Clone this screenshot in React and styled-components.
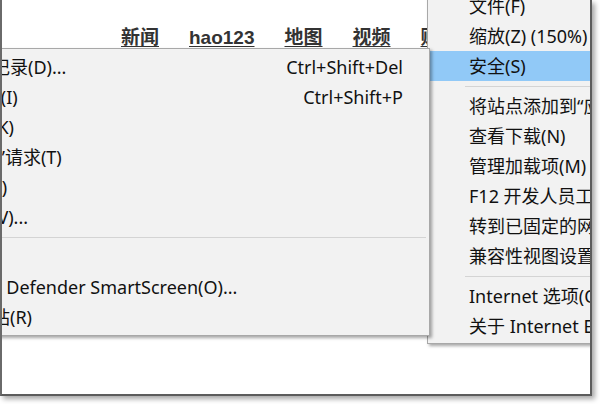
import styled, { createGlobalStyle } from "styled-components";

const GlobalStyle = createGlobalStyle`
  html, body {
    margin: 0;
    padding: 0;
    background: #ffffff;
  }
  body {
    width: 600px;
    height: 404px;
    overflow: hidden;
  }
`;

const Frame = styled.div`
  position: relative;
  box-sizing: border-box;
  width: 592px;
  height: 396px;
  background: #ffffff;
  border-left: 2px solid #6a6a6a;
  border-right: 2px solid #5c5c5c;
  border-bottom: 2px solid #5c5c5c;
  box-shadow: 3px 3px 5px rgba(0, 0, 0, 0.35);
  overflow: hidden;
`;

const NavBar = styled.nav`
  display: flex;
  gap: 30px;
  padding: 28px 0 0 119px;
`;

const NavLink = styled.a`
  font-family: "Liberation Sans", "Noto Sans CJK SC", sans-serif;
  font-weight: 700;
  font-size: 19px;
  line-height: 20px;
  color: #333333;
  text-decoration: underline;
  text-underline-offset: 2px;
  white-space: nowrap;
`;

const Menu = styled.div`
  position: absolute;
  box-sizing: border-box;
  background: #f2f2f2;
  border: 1px solid #a8a8a8;
  box-shadow: 2px 2px 3px rgba(0, 0, 0, 0.35);
  font-family: "Noto Sans", "Noto Sans CJK SC", sans-serif;
  font-size: 18px;
  color: #111111;
`;

const SafetyMenu = styled(Menu)`
  top: 48px;
  left: -132px;
  width: 560px;
  padding: 3px 0;
  z-index: 2;
`;

const ToolsMenu = styled(Menu)`
  top: -12px;
  left: 425px;
  width: 200px;
  padding: 2px 0;
  z-index: 1;
`;

const Item = styled.div`
  display: flex;
  justify-content: space-between;
  align-items: center;
  height: 30px;
  line-height: 30px;
  padding: ${(p) => (p.$wide ? "0 26px 0 13px" : "0 0 0 41px")};
  background: ${(p) => (p.$active ? "#91c9f7" : "transparent")};
  white-space: nowrap;
`;

const Shortcut = styled.span`
  margin-left: auto;
`;

const Separator = styled.div`
  height: 10px;
  display: flex;
  align-items: center;
  padding: ${(p) => (p.$wide ? "0 3px 0 0" : "0 0 0 37px")};

  &::after {
    content: "";
    flex: 1;
    height: 1px;
    background: #d4d4d4;
  }
`;

const safetyItems = [
  { label: "删除浏览历史记录(D)...", key: "Ctrl+Shift+Del" },
  { label: "InPrivate 浏览(I)", key: "Ctrl+Shift+P" },
  { label: "启用跟踪保护(K)" },
  { label: "打开“请勿跟踪”请求(T)" },
  { label: "ActiveX 筛选(X)" },
  { label: "网页隐私策略(V)..." },
  { sep: true },
  { label: "检查此网站(H)" },
  { label: "关闭 Windows Defender SmartScreen(O)..." },
  { label: "报告不安全网站(R)" },
];

const toolsItems = [
  { label: "文件(F)" },
  { label: "缩放(Z) (150%)" },
  { label: "安全(S)", active: true },
  { sep: true },
  { label: "将站点添加到“应用”视图(I)" },
  { label: "查看下载(N)" },
  { label: "管理加载项(M)" },
  { label: "F12 开发人员工具(L)" },
  { label: "转到已固定的网站(G)" },
  { label: "兼容性视图设置(B)" },
  { sep: true },
  { label: "Internet 选项(O)" },
  { label: "关于 Internet Explorer(A)" },
];

export default function App() {
  return (
    <>
      <GlobalStyle />
      <Frame>
        <NavBar>
          <NavLink>新闻</NavLink>
          <NavLink>hao123</NavLink>
          <NavLink>地图</NavLink>
          <NavLink>视频</NavLink>
          <NavLink>贴吧</NavLink>
        </NavBar>

        <ToolsMenu>
          {toolsItems.map((it, i) =>
            it.sep ? (
              <Separator key={i} />
            ) : (
              <Item key={i} $active={it.active}>
                {it.label}
              </Item>
            )
          )}
        </ToolsMenu>

        <SafetyMenu>
          {safetyItems.map((it, i) =>
            it.sep ? (
              <Separator key={i} $wide />
            ) : (
              <Item key={i} $wide>
                <span>{it.label}</span>
                {it.key && <Shortcut>{it.key}</Shortcut>}
              </Item>
            )
          )}
        </SafetyMenu>
      </Frame>
    </>
  );
}
